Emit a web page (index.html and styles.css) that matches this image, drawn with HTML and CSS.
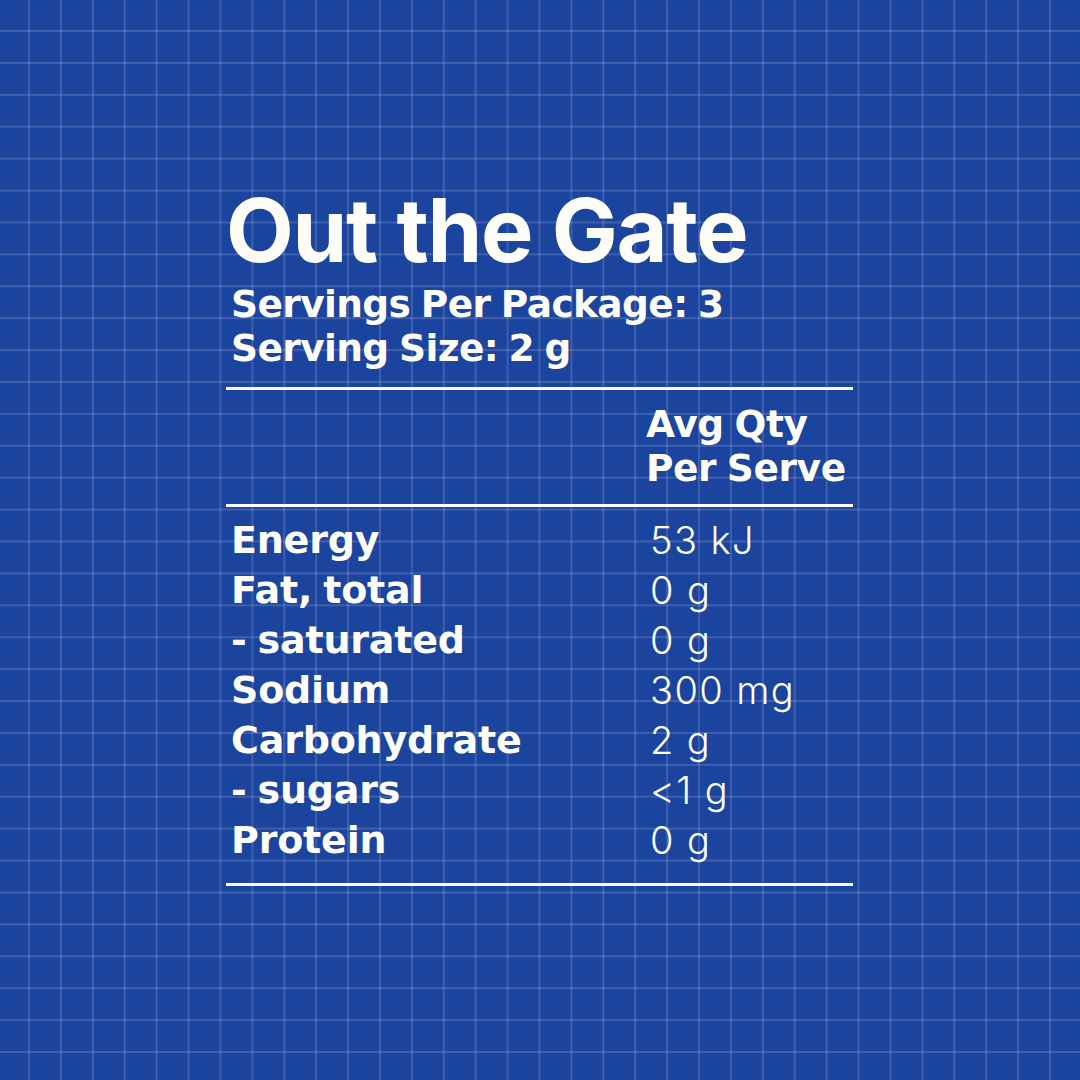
FILE: index.html
```html
<!DOCTYPE html>
<html lang="en">
<head>
<meta charset="utf-8">
<title>Out the Gate – Nutrition</title>
<link rel="stylesheet" href="styles.css">
</head>
<body>
<main class="panel">
  <h1 class="title">Out the Gate</h1>
  <div class="meta">
    <p>Servings Per Package: 3</p>
    <p>Serving Size: 2 g</p>
  </div>
  <div class="rule"></div>
  <div class="head">
    <span></span>
    <span class="head-col">Avg Qty<br>Per Serve</span>
  </div>
  <div class="rule"></div>
  <div class="rows">
    <span class="label">Energy</span><span class="value">53 kJ</span>
    <span class="label">Fat, total</span><span class="value">0 g</span>
    <span class="label">- saturated</span><span class="value">0 g</span>
    <span class="label">Sodium</span><span class="value">300 mg</span>
    <span class="label">Carbohydrate</span><span class="value">2 g</span>
    <span class="label">- sugars</span><span class="value">&lt;1 g</span>
    <span class="label">Protein</span><span class="value">0 g</span>
  </div>
  <div class="rule"></div>
</main>
</body>
</html>
```

FILE: styles.css
```css
html, body {
  margin: 0;
  padding: 0;
}
body {
  width: 1080px;
  height: 1080px;
  overflow: hidden;
  background-color: #1b449e;
  background-image:
    linear-gradient(to right, rgba(255,255,255,0.15) 2px, transparent 2px),
    linear-gradient(to bottom, rgba(255,255,255,0.15) 2px, transparent 2px);
  background-size: 31.92px 31.92px;
  background-position: 28px 30px;
  font-family: Inter, "Liberation Sans", sans-serif;
  color: #fdfcf6;
}
.panel {
  margin-left: 226px;
  width: 627px;
  padding-top: 186px;
  display: flex;
  flex-direction: column;
}
.title {
  margin: 0;
  font-size: 88px;
  line-height: 88px;
  font-weight: 700;
  letter-spacing: -1.3px;
}
.meta {
  margin-top: 8px;
  padding-left: 5px;
  font-family: "DejaVu Sans", Inter, sans-serif;
  font-size: 37.5px;
  line-height: 44px;
  font-weight: 700;
  letter-spacing: -0.6px;
  word-spacing: -2px;
}
.meta p {
  margin: 0;
}
.rule {
  height: 3px;
  background: #fdfcf6;
}
.meta + .rule {
  margin-top: 17px;
}
.head {
  display: grid;
  grid-template-columns: 420px 1fr;
  padding: 12px 0 14px;
}
.head-col {
  font-family: "DejaVu Sans", Inter, sans-serif;
  font-size: 37.5px;
  line-height: 44px;
  font-weight: 700;
  letter-spacing: -0.4px;
  word-spacing: -2px;
}
.rows {
  display: grid;
  grid-template-columns: 420px 1fr;
  padding: 8px 0 18px;
  font-size: 37px;
  line-height: 50px;
}
.label {
  padding-left: 5px;
  font-family: "DejaVu Sans", Inter, sans-serif;
  font-size: 38px;
  font-weight: 700;
  letter-spacing: -0.2px;
  word-spacing: -2px;
}
.value {
  padding-left: 4px;
  font-size: 38px;
  font-weight: 300;
  letter-spacing: 1.4px;
}
```
